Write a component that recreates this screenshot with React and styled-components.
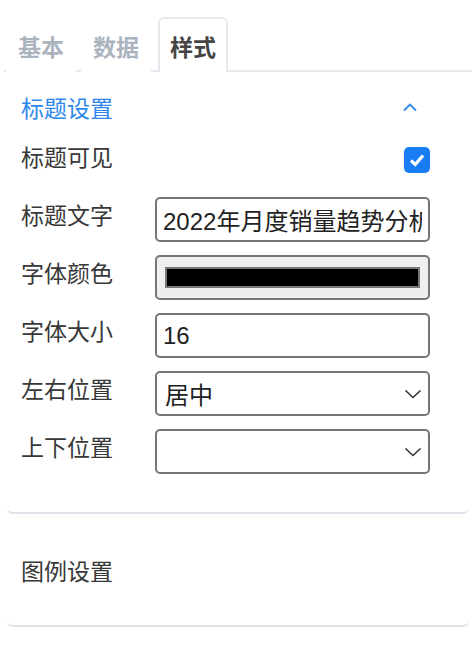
import styled, { createGlobalStyle } from 'styled-components';
import { useState } from 'react';

const GlobalStyle = createGlobalStyle`
  body {
    margin: 0;
    background: #fff;
    font-family: "Liberation Sans", "Noto Sans CJK SC", sans-serif;
  }
`;

const TABS = ['基本', '数据', '样式'];

function App() {
  const [tab, setTab] = useState(2);
  const [visible, setVisible] = useState(true);
  const [title, setTitle] = useState('2022年月度销量趋势分析');
  const [size, setSize] = useState('16');

  return (
    <Page>
      <GlobalStyle />
      <TabBar>
        {TABS.map((name, i) => (
          <Tab key={name} $active={i === tab} onClick={() => setTab(i)}>
            {name}
          </Tab>
        ))}
      </TabBar>

      <Panel>
        <PanelHeader $open>
          标题设置
          <svg width="16" height="10" viewBox="0 0 16 10">
            <path d="M2 8.5 L8 2.5 L14 8.5" fill="none" stroke="#2f88ee" strokeWidth="1.8" />
          </svg>
        </PanelHeader>
        <Rows>
          <Row>
            <Label>标题可见</Label>
            <CheckBox $checked={visible} onClick={() => setVisible(!visible)}>
              {visible && (
                <svg width="20" height="20" viewBox="0 0 20 20">
                  <path d="M4 10.5 L8.2 14.5 L16 5.5" fill="none" stroke="#fff" strokeWidth="3.2" />
                </svg>
              )}
            </CheckBox>
          </Row>
          <Row>
            <Label>标题文字</Label>
            <TextInput value={title} onChange={(e) => setTitle(e.target.value)} />
          </Row>
          <Row>
            <Label>字体颜色</Label>
            <ColorInput type="color" defaultValue="#000000" />
          </Row>
          <Row>
            <Label>字体大小</Label>
            <TextInput value={size} onChange={(e) => setSize(e.target.value)} />
          </Row>
          <Row>
            <Label>左右位置</Label>
            <SelectWrap>
              <Select defaultValue="center">
                <option value="left">居左</option>
                <option value="center">居中</option>
                <option value="right">居右</option>
              </Select>
              <DownArrow />
            </SelectWrap>
          </Row>
          <Row>
            <Label>上下位置</Label>
            <SelectWrap>
              <Select defaultValue="">
                <option value=""></option>
                <option value="top">顶部</option>
                <option value="bottom">底部</option>
              </Select>
              <DownArrow />
            </SelectWrap>
          </Row>
        </Rows>
      </Panel>

      <Panel>
        <PanelHeader $tall>图例设置</PanelHeader>
      </Panel>
    </Page>
  );
}

function DownArrow() {
  return (
    <ArrowIcon width="18" height="10" viewBox="0 0 18 10">
      <path d="M1.5 1.5 L9 8.5 L16.5 1.5" fill="none" stroke="#333" strokeWidth="1.6" />
    </ArrowIcon>
  );
}

const Page = styled.div`
  width: 474px;
  padding-top: 17px;
  box-sizing: border-box;
`;

const TabBar = styled.div`
  display: flex;
  gap: 5px;
  margin: 0 2px 0 4px;
  padding-left: 2px;
  border-bottom: 2px solid #e6e9ee;
`;

const Tab = styled.div`
  width: 70px;
  height: 55px;
  box-sizing: border-box;
  display: flex;
  align-items: center;
  justify-content: center;
  font-family: "Noto Sans CJK SC", sans-serif;
  font-size: 23px;
  font-weight: 700;
  color: ${(p) => (p.$active ? '#454545' : '#abb3be')};
  border: 2px solid ${(p) => (p.$active ? '#e6e9ee' : 'transparent')};
  border-bottom: none;
  border-radius: 6px 6px 0 0;
  background: #fff;
  margin-bottom: -2px;
  cursor: pointer;
  &:nth-child(3) {
    margin-left: 2px;
  }
`;

const Panel = styled.div`
  margin: 0 5px 0 7px;
  border-bottom: 2px solid #dde1e8;
  border-radius: 0 0 6px 6px;
`;

const PanelHeader = styled.div`
  display: flex;
  align-items: center;
  justify-content: space-between;
  height: ${(p) => (p.$tall ? '111px' : '67px')};
  padding: ${(p) => (p.$tall ? '0 12px 0 14px' : '2px 12px 0 14px')};
  box-sizing: border-box;
  font-family: "Noto Sans CJK SC", sans-serif;
  font-size: 23px;
  color: ${(p) => (p.$open ? '#2f88ee' : '#383838')};
  svg {
    margin-right: 39px;
  }
`;

const Rows = styled.div`
  display: flex;
  flex-direction: column;
  gap: 13px;
  padding: 0 0 38px 14px;
`;

const Row = styled.div`
  display: flex;
  align-items: flex-start;
  min-height: 45px;
`;

const Label = styled.div`
  width: 134px;
  line-height: 34px;
  font-family: "Noto Sans CJK SC", sans-serif;
  font-size: 23px;
  color: #383838;
`;

const CheckBox = styled.div`
  margin: 8px 0 0 249px;
  width: 26px;
  height: 26px;
  border-radius: 5px;
  background: ${(p) => (p.$checked ? '#1a7cf5' : '#fff')};
  border: ${(p) => (p.$checked ? 'none' : '2px solid #767676')};
  display: flex;
  align-items: center;
  justify-content: center;
  cursor: pointer;
`;

const TextInput = styled.input`
  width: 275px;
  height: 45px;
  box-sizing: border-box;
  border: 2px solid #767676;
  border-radius: 5px;
  padding: 0 6px;
  font-family: "Liberation Sans", "Noto Sans CJK SC", sans-serif;
  font-size: 24px;
  color: #222;
  outline: none;
`;

const ColorInput = styled.input`
  width: 275px;
  height: 45px;
  box-sizing: border-box;
  border: 2px solid #767676;
  border-radius: 5px;
  background: #efefef;
  padding: 10px 8px;
  cursor: pointer;
  &::-webkit-color-swatch-wrapper {
    padding: 0;
  }
  &::-webkit-color-swatch {
    border: 2px solid #777;
    border-radius: 0;
  }
`;

const SelectWrap = styled.div`
  position: relative;
  width: 275px;
  height: 45px;
`;

const Select = styled.select`
  appearance: none;
  width: 100%;
  height: 100%;
  box-sizing: border-box;
  border: 2px solid #767676;
  border-radius: 5px;
  background: #fff;
  padding: 0 36px 0 8px;
  font-family: "Noto Sans CJK SC", sans-serif;
  font-size: 24px;
  color: #222;
  outline: none;
`;

const ArrowIcon = styled.svg`
  position: absolute;
  right: 8px;
  top: 18px;
  pointer-events: none;
`;

export default App;
